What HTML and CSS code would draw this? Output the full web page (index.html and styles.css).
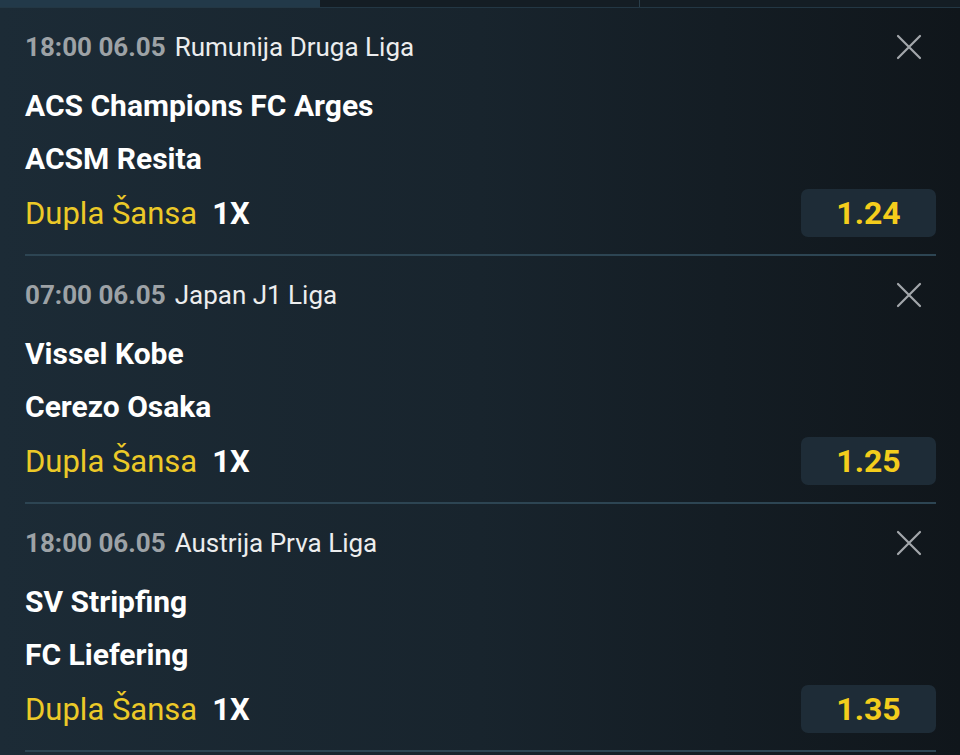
FILE: index.html
```html
<html lang="en">
<head>
<meta charset="utf-8">
<link rel="stylesheet" href="styles.css">
</head>
<body>
<div class="tabs">
    <div class="tab active"></div>
    <div class="tab"></div>
    <div class="tab split"></div>
</div>
<div class="ticket">
    <div class="bet">
        <div class="bet-head">
            <span class="when">18:00 06.05</span>
            <span class="league">Rumunija Druga Liga</span>
            <!-- close icon -->
            <svg class="close" width="26" height="26" viewBox="0 0 26 26" fill="none" stroke="#a3a7ab" stroke-width="2.2" stroke-linecap="round">
                <path d="M2 2L24 24M24 2L2 24"/>
            </svg>
        </div>
        <div class="teams">
            <div class="team">ACS Champions FC Arges</div>
            <div class="team">ACSM Resita</div>
        </div>
        <div class="market">
            <span class="market-name">Dupla Šansa</span>
            <span class="pick">1X</span>
            <span class="odds">1.24</span>
        </div>
    </div>
    <div class="bet">
        <div class="bet-head">
            <span class="when">07:00 06.05</span>
            <span class="league">Japan J1 Liga</span>
            <svg class="close" width="26" height="26" viewBox="0 0 26 26" fill="none" stroke="#a3a7ab" stroke-width="2.2" stroke-linecap="round">
                <path d="M2 2L24 24M24 2L2 24"/>
            </svg>
        </div>
        <div class="teams">
            <div class="team">Vissel Kobe</div>
            <div class="team">Cerezo Osaka</div>
        </div>
        <div class="market">
            <span class="market-name">Dupla Šansa</span>
            <span class="pick">1X</span>
            <span class="odds">1.25</span>
        </div>
    </div>
    <div class="bet">
        <div class="bet-head">
            <span class="when">18:00 06.05</span>
            <span class="league">Austrija Prva Liga</span>
            <svg class="close" width="26" height="26" viewBox="0 0 26 26" fill="none" stroke="#a3a7ab" stroke-width="2.2" stroke-linecap="round">
                <path d="M2 2L24 24M24 2L2 24"/>
            </svg>
        </div>
        <div class="teams">
            <div class="team">SV Stripfing</div>
            <div class="team">FC Liefering</div>
        </div>
        <div class="market">
            <span class="market-name">Dupla Šansa</span>
            <span class="pick">1X</span>
            <span class="odds">1.35</span>
        </div>
    </div>
</div>
</body>
</html>
```

FILE: styles.css
```css
body {
    margin: 0;
    padding: 0;
    height: 755px;
    overflow: hidden;
    font-family: Roboto, "Noto Sans", sans-serif;
    background: linear-gradient(90deg, #1c2b36 0%, #18242d 50%, #10161b 100%);
    color: #ffffff;
}
.tabs {
    display: flex;
    height: 7px;
    border-bottom: 1px solid #233744;
}
.tab {
    flex: 1;
    background-color: #141d24;
}
.tab.active {
    background-color: #223949;
}
.tab.split {
    border-left: 1px solid #2a3e4a;
}
.ticket {
    padding: 0 24px 0 25px;
}
.bet {
    height: 246px;
    border-bottom: 2px solid #2d4553;
}
.bet-head {
    display: flex;
    align-items: center;
    padding-top: 24px;
    height: 30px;
    font-size: 26px;
}
.when {
    color: #9da2a6;
    font-weight: bold;
    margin-right: 9px;
}
.league {
    color: #ecedee;
}
.close {
    margin-left: auto;
    margin-right: 14px;
}
.teams {
    margin-top: 17px;
}
.team {
    font-size: 30px;
    font-weight: bold;
    line-height: 53px;
}
.market {
    display: flex;
    align-items: center;
    margin-top: 4px;
    font-size: 31px;
}
.market-name {
    color: #ecc928;
    margin-right: 15px;
}
.pick {
    font-weight: bold;
}
.odds {
    margin-left: auto;
    width: 135px;
    height: 48px;
    line-height: 48px;
    text-align: center;
    background-color: #1e2c37;
    border-radius: 7px;
    color: #f4cd1c;
    font-size: 32px;
    font-weight: bold;
}
```
